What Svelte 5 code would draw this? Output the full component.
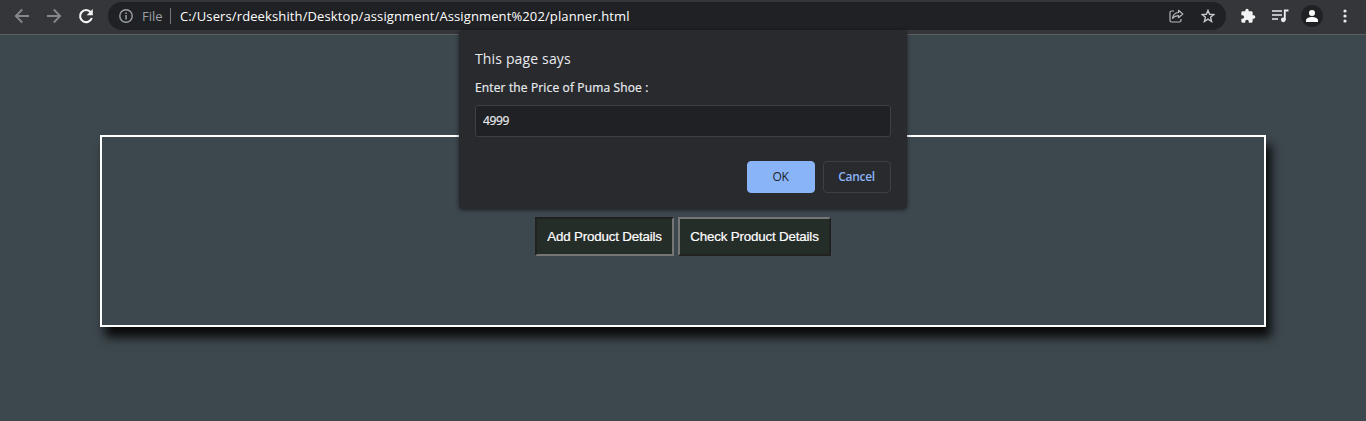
<script>
  let price = $state('4999');
</script>

<div class="window">
  <header class="toolbar">
    <nav class="nav">
      <svg width="16" height="16" viewBox="0 0 16 16" fill="none" stroke="#87888b" stroke-width="1.8"><path d="M15 8H2M8.2 1.5 1.8 8l6.4 6.5" /></svg>
      <svg width="16" height="16" viewBox="0 0 16 16" fill="none" stroke="#87888b" stroke-width="1.8"><path d="M1 8h13M7.8 1.5 14.2 8l-6.4 6.5" /></svg>
      <svg width="16" height="16" viewBox="0 0 16 16"><path d="M12.7 4.2A6 6 0 1 0 13.8 10" fill="none" stroke="#f1f3f4" stroke-width="2.1" /><path d="M14.8 1v6.2H8.6z" fill="#f1f3f4" /></svg>
    </nav>
    <div class="address">
      <svg class="info" width="14" height="14" viewBox="0 0 14 14"><circle cx="7" cy="7" r="6.2" fill="none" stroke="#9aa0a6" stroke-width="1.4" /><path d="M6.3 6h1.5v4.5H6.3zM6.3 3.4h1.5v1.5H6.3z" fill="#9aa0a6" /></svg>
      <span class="scheme">File</span>
      <i class="rule"></i>
      <span class="url">C:/Users/rdeekshith/Desktop/assignment/Assignment%202/planner.html</span>
      <svg class="share" width="15" height="14" viewBox="0 0 15 14" fill="none" stroke="#b4b7bb" stroke-width="1.2"><path d="M5 2H2.500Q1 2 1 3.500V11.500Q1 13 2.500 13H10.500Q12 13 12 11.500V10" /><path d="M9.500 1.300 13.800 5 9.500 8.700V6.600Q5.800 6.500 3.500 9.400 4.200 4 9.500 3.500z" stroke-linejoin="round" /></svg>
      <svg class="star" width="14" height="14" viewBox="0 0 14 14" fill="none" stroke="#c4c7ca" stroke-width="1.4"><path d="m7 1.400 1.600 3.900 4.200.3-3.200 2.700 1 4.200L7 10.200l-3.600 2.300 1-4.200-3.200-2.700 4.200-.3z" /></svg>
    </div>
    <div class="tools">
      <svg width="16" height="16" viewBox="0 0 24 24" fill="#f1f3f4"><path d="M20.500 11H19V7a2 2 0 0 0-2-2h-4V3.500a2.500 2.500 0 0 0-5 0V5H4a2 2 0 0 0-2 2v3.800h1.500a2.700 2.700 0 0 1 0 5.400H2V20a2 2 0 0 0 2 2h3.800v-1.500a2.700 2.700 0 0 1 5.400 0V22H17a2 2 0 0 0 2-2v-4h1.500a2.500 2.500 0 0 0 0-5z" /></svg>
      <svg class="media" width="17" height="14" viewBox="0 0 17 14"><path d="M0 2h10M0 6h10M0 10h6" stroke="#e8eaed" stroke-width="1.700" /><path d="M12.800 11V1.500H16.500" fill="none" stroke="#e8eaed" stroke-width="1.900" /><circle cx="11.300" cy="10.800" r="2.400" fill="#e8eaed" /></svg>
      <svg class="person" width="22" height="22" viewBox="0 0 22 22"><circle cx="11" cy="11" r="11" fill="#202124" /><circle cx="11" cy="7.900" r="3" fill="#fff" /><path d="M5 17v-1.700C5 13.200 8.500 12 11 12s6 1.200 6 3.300V17z" fill="#fff" /></svg>
      <svg width="4" height="14" viewBox="0 0 4 14" fill="#e8eaed"><circle cx="2" cy="2" r="1.600" /><circle cx="2" cy="7" r="1.600" /><circle cx="2" cy="12" r="1.600" /></svg>
    </div>
  </header>
  <main>
    <section class="planner">
      <button class="pressed">Add Product Details</button>
      <button>Check Product Details</button>
    </section>
  </main>
  <div class="dialog" role="dialog" aria-label="This page says">
    <div class="title">This page says</div>
    <div class="message">Enter the Price of Puma Shoe :</div>
    <input bind:value={price} aria-label="Price" />
    <div class="actions">
      <button class="ok">OK</button>
      <button class="cancel">Cancel</button>
    </div>
  </div>
</div>

<style>
  .window {
    position: relative;
    height: 421px;
    overflow: hidden;
    display: flex;
    flex-direction: column;
    background: #3d484e;
    font-family: "Open Sans", "Noto Sans", sans-serif;
  }
  .window *, .window { box-sizing: border-box; }
  svg { display: block; flex: none; }
  .toolbar {
    height: 35px;
    flex: none;
    display: flex;
    align-items: flex-start;
    background: #35363a;
    border-bottom: 1px solid #5d5d61;
  }
  .nav { display: flex; gap: 16px; padding: 8px 0 0 14px; width: 108px; }
  .address {
    display: flex;
    align-items: center;
    width: 1118px;
    height: 28px;
    margin-top: 2px;
    padding: 0 11px;
    border-radius: 14px;
    background: #202124;
    font-size: 13px;
    white-space: nowrap;
  }
  .scheme { color: #9aa0a6; margin-left: 9px; width: 28px; }
  .rule { width: 1px; height: 16px; background: #75787c; }
  .url { color: #fff; margin-left: 9px; letter-spacing: .12px; }
  .share { margin-left: auto; }
  .star { margin-left: 17px; }
  .tools { display: flex; align-items: center; height: 28px; margin-top: 2px; padding-left: 14px; }
  .media { margin-left: 16px; }
  .person { margin-left: 12px; margin-right: 20px; }
  main { padding: 100px 100px 0; }
  .planner {
    height: 192px;
    border: 2px solid #fff;
    box-shadow: 5px 10px 10px #080808;
    display: flex;
    justify-content: center;
    align-items: flex-start;
    gap: 4px;
    padding-top: 80px;
  }
  .planner button {
    width: 153px;
    height: 39px;
    padding: 0;
    border: 2px solid;
    border-color: #767676 #212121 #212121 #767676;
    background: #252d29;
    color: #fff;
    font: 13.333px "Liberation Sans", Arial, sans-serif;
    letter-spacing: -.17px;
    white-space: nowrap;
    -webkit-text-stroke: .2px #fff;
  }
  .planner .pressed { width: 139px; border-color: #212121 #767676 #767676 #212121; }
  .dialog {
    position: absolute;
    left: 459px;
    top: 30px;
    width: 448px;
    height: 179px;
    padding: 18px 16px 16px;
    border-radius: 4px;
    background: #292a2d;
    box-shadow: 0 1px 4px rgba(0, 0, 0, .55);
    color: #e8eaed;
    display: flex;
    flex-direction: column;
    white-space: nowrap;
  }
  .title { height: 22px; line-height: 22px; font-size: 14px; letter-spacing: .15px; }
  .message { height: 20px; margin-top: 8px; line-height: 20px; font-size: 12px; letter-spacing: .14px; -webkit-text-stroke: .2px #e8eaed; }
  input {
    height: 32px;
    margin-top: 7px;
    padding: 0 7px 2px;
    border: 1px solid #3c4043;
    border-radius: 3px;
    background: #202124;
    color: #e8eaed;
    font: 12px "Open Sans", sans-serif;
    letter-spacing: -.4px;
    -webkit-text-stroke: .2px #e8eaed;
  }
  .actions { display: flex; justify-content: flex-end; gap: 8px; margin-top: 24px; }
  .actions button {
    width: 68px;
    height: 32px;
    padding: 0 1px 2px 0;
    border: 1px solid #3c4043;
    border-radius: 4px;
    background: transparent;
    color: #8ab4f8;
    font: 600 12px "Open Sans", sans-serif;
    letter-spacing: -.3px;
  }
  .actions .ok { background: #8ab4f8; border-color: #8ab4f8; color: #202124; font-weight: 400; }
</style>
